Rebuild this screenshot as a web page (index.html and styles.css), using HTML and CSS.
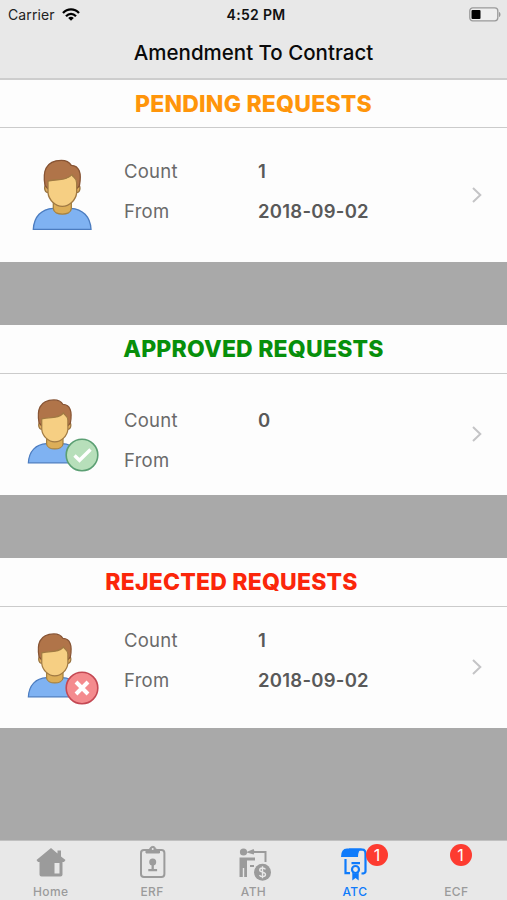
FILE: index.html
```html
<!DOCTYPE html>
<html lang="en">
<head>
    <meta charset="UTF-8">
    <meta name="viewport" content="width=device-width, initial-scale=1.0">
    <title>Amendment To Contract</title>
    <link rel="stylesheet" href="styles.css">
</head>
<body>
    <svg class="defs" width="0" height="0">
        <symbol id="person" viewBox="66 58 180 214">
            <path d="M70 268 C72 230 94 207 130 205 L182 205 C218 207 241 230 243 268 Z" fill="#7fb2f2" stroke="#4b7cc0" stroke-width="4"/>
            <path d="M130 180 V206 C132 228 182 228 184 206 V180 Z" fill="#dcae58" stroke="#a58243" stroke-width="4"/>
            <path d="M112 134 C101 132 101 156 114 158 M201 134 C213 132 213 156 200 158" fill="#e0ae5f" stroke="#96713c" stroke-width="4"/>
            <path d="M105 136 C98 96 105 62 154 61 C166 61 178 66 184 76 C207 77 216 98 208 138 L200 146 L113 146 Z" fill="#b07449" stroke="#875434" stroke-width="4"/>
            <path d="M114 124 C126 115 164 128 186 104 C189 113 200 112 200 128 V158 C198 180 178 199 157 199 C136 199 116 180 114 158 Z" fill="#f6cf83" stroke="#a17a43" stroke-width="4"/>
        </symbol>
        <symbol id="chevron" viewBox="0 0 10 16">
            <path d="M1 1 L8.3 8 L1 15" fill="none" stroke="#c4c4c6" stroke-width="2"/>
        </symbol>
    </svg>

    <header class="header">
        <div class="status-bar">
            <div class="carrier">
                <span>Carrier</span>
                <svg class="wifi" viewBox="0 0 18 13" fill="none" stroke="#000" stroke-width="2.3">
                    <path d="M1 5 C5.5 .2 12.5 .2 17 5"/>
                    <path d="M4 8.2 C7 5.1 11 5.1 14 8.2"/>
                    <path d="M6.2 10 C7.9 8.4 10.1 8.4 11.8 10 L9 12.8 Z" fill="#000" stroke="none"/>
                </svg>
            </div>
            <div class="time">4:52 PM</div>
            <svg class="battery" viewBox="0 0 32 15">
                <rect x=".8" y=".8" width="28" height="13" rx="3" fill="#eee" stroke="#999" stroke-width="1.3"/>
                <rect x="2.5" y="3" width="9" height="9" rx="1"/>
                <path d="M30 5 C32 5.5 32 9.5 30 10 Z" fill="#999"/>
            </svg>
        </div>
        <h1>Amendment To Contract</h1>
    </header>

    <main>
        <section class="card pending">
            <h2>PENDING REQUESTS</h2>
            <div class="card-body">
                <div class="avatar">
                    <svg class="person"><use href="#person"/></svg>
                </div>
                <dl>
                    <dt>Count</dt><dd>1</dd>
                    <dt>From</dt><dd>2018-09-02</dd>
                </dl>
                <svg class="chevron"><use href="#chevron"/></svg>
            </div>
        </section>

        <section class="card approved">
            <h2>APPROVED REQUESTS</h2>
            <div class="card-body">
                <div class="avatar">
                    <svg class="person"><use href="#person"/></svg>
                    <svg class="mark" viewBox="0 0 34 34">
                        <circle cx="17" cy="17" r="15.8" fill="#b7dfba" stroke="#5b9f73" stroke-width="1.6"/>
                        <path d="M9.5 17.5 L14.5 22.3 L25.5 11.5" fill="none" stroke="#fff" stroke-width="3.4"/>
                    </svg>
                </div>
                <dl>
                    <dt>Count</dt><dd>0</dd>
                    <dt>From</dt><dd></dd>
                </dl>
                <svg class="chevron"><use href="#chevron"/></svg>
            </div>
        </section>

        <section class="card rejected">
            <h2>REJECTED REQUESTS</h2>
            <div class="card-body">
                <div class="avatar">
                    <svg class="person"><use href="#person"/></svg>
                    <svg class="mark" viewBox="0 0 34 34">
                        <circle cx="17" cy="17" r="15.8" fill="#f48b8e" stroke="#c44853" stroke-width="1.6"/>
                        <path d="M11 11 L23 23 M23 11 L11 23" stroke="#fff" stroke-width="4"/>
                    </svg>
                </div>
                <dl>
                    <dt>Count</dt><dd>1</dd>
                    <dt>From</dt><dd>2018-09-02</dd>
                </dl>
                <svg class="chevron"><use href="#chevron"/></svg>
            </div>
        </section>
    </main>

    <nav class="tab-bar">
        <a class="tab">
            <svg viewBox="0 0 36 36">
                <path d="M3.5 15 L18 3 L24.5 8.5 V5.5 H28 V11.5 L32.5 15 L31 17 H29.5 V29.5 Q29.5 31.5 27.5 31.5 H8.5 Q6.5 31.5 6.5 29.5 V17 H5 Z" fill="currentColor"/>
                <rect x="21.5" y="18" width="5" height="10.5" fill="#e8e8e8"/>
            </svg>
            <span>Home</span>
        </a>
        <a class="tab">
            <svg viewBox="0 0 36 36" fill="none" stroke="currentColor" stroke-width="2">
                <rect x="7" y="5" width="23.4" height="27" rx="3"/>
                <path d="M12 8 V5 H15.5 C15.5 .2 22 .2 22 5 H25.500 V8 Z" fill="currentColor" stroke-width="1"/>
                <circle cx="18.7" cy="4" r="1" fill="#e8e8e8" stroke="none"/>
                <circle cx="18.7" cy="17" r="3.5" fill="currentColor" stroke="none"/>
                <path d="M18.7 19 V25 M14.3 25.2 H23.1" stroke-width="2.3"/>
            </svg>
            <span>ERF</span>
        </a>
        <a class="tab">
            <svg viewBox="0 0 36 36" fill="none" stroke="currentColor" stroke-width="2">
                <circle cx="7.5" cy="7" r="3.6" fill="currentColor" stroke="none"/>
                <path d="M3.5 12.5 H19 V15.5 H11 V32 H8.2 V23 H6.8 V32 H3.5 Z" fill="currentColor" stroke="none"/>
                <path d="M14 7 H29.5 V17"/>
                <path d="M18 5 L13 7 L18 8.5 M14 21 H18"/>
                <circle cx="26.5" cy="27.3" r="8.5" fill="currentColor" stroke="none"/>
                <path d="M29.5 24.3 C28 22.3 23.7 22.5 23.7 25 C23.7 27.8 29.5 26.6 29.5 29.5 C29.5 32.2 24.7 32.3 23.5 30.1 M26.5 21.3 V33.3" stroke="#e8e8e8" stroke-width="1.4"/>
            </svg>
            <span>ATH</span>
        </a>
        <a class="tab active">
            <svg viewBox="0 0 36 36" fill="none" stroke="currentColor" stroke-width="2.2">
                <path d="M4 12 Q4 3.5 10 3.5 H25 Q21 5 21 12 Z" fill="currentColor" stroke="none"/>
                <path d="M12 4.6 H25.5 Q28.5 4.6 28.5 9 V26.5 Q28.5 28.5 24.5 28.5"/>
                <path d="M8.5 14 V28.2 H13 M14.5 18.2 H23"/>
                <circle cx="18.5" cy="24.5" r="3.5"/>
                <path d="M15.3 27 V35.5 L18.5 33 L21.7 35.5 V27 Q18.5 31 15.3 27 Z" fill="currentColor" stroke="none"/>
            </svg>
            <span>ATC</span>
            <b class="badge">1</b>
        </a>
        <a class="tab empty">
            <span>ECF</span>
            <b class="badge">1</b>
        </a>
    </nav>
</body>
</html>
```
FILE: styles.css
```css
* {
    box-sizing: border-box;
}
body {
    margin: 0;
    height: 900px;
    display: flex;
    flex-direction: column;
    overflow: hidden;
    background: #a9a9a9;
    font-family: Inter, "Liberation Sans", sans-serif;
}
.defs {
    position: absolute;
}
.header {
    height: 80px;
    background: #e8e8e8;
    border-bottom: 2px solid #cdcdcd;
}
.status-bar {
    display: grid;
    grid-template-columns: 1fr auto 1fr;
    align-items: center;
    height: 28px;
    padding: 0 6px 0 8px;
    font-size: 14px;
    color: #222;
}
.carrier {
    display: flex;
    align-items: center;
    gap: 7px;
    letter-spacing: 0.1px;
}
.wifi {
    width: 18px;
    height: 13px;
}
.time {
    font-weight: 600;
    letter-spacing: 0.3px;
    padding-left: 3px;
    color: #111;
}
.battery {
    justify-self: end;
    width: 32px;
    height: 15px;
}
h1 {
    margin: 10px 0 0;
    font-size: 20.5px;
    line-height: 30px;
    font-weight: 500;
    text-align: center;
    color: #0a0a0a;
}
main {
    flex: 1;
    display: flex;
    flex-direction: column;
    gap: 63px;
}
.card {
    background: #fdfdfd;
}
h2 {
    margin: 0;
    height: 48px;
    border-bottom: 1px solid #cbcbcb;
    font-size: 23px;
    line-height: 48px;
    font-weight: 800;
    letter-spacing: 0.2px;
    text-align: center;
}
.pending h2 {
    color: #ff950a;
}
.approved h2 {
    height: 49px;
    color: #078f0b;
}
.rejected h2 {
    height: 49px;
    padding-right: 44px;
    color: #fb260a;
}
.card-body {
    display: flex;
    height: 134px;
    padding: 23px 24px 0 27px;
}
.approved .card-body {
    height: 121px;
    padding-top: 26px;
}
.rejected .card-body {
    height: 121px;
    padding-top: 13px;
}
.avatar {
    position: relative;
    width: 97px;
}
.person {
    display: block;
    width: 55px;
    height: 65px;
}
.pending .person {
    width: 60px;
    height: 72px;
    margin: 8px 0 0 5px;
}
.approved .person {
    margin-top: -1px;
}
.rejected .person {
    margin-top: 13px;
}
.mark {
    position: absolute;
    left: 38px;
    top: 38px;
    width: 34px;
    height: 34px;
}
.rejected .mark {
    top: 51px;
}
dl {
    flex: 1;
    display: grid;
    grid-template-columns: 134px 1fr;
    grid-auto-rows: 40px;
    margin: 0;
    font-size: 18.5px;
    line-height: 41px;
    letter-spacing: 0.25px;
    color: #6a6a6a;
}
dd {
    margin: 0;
    font-weight: 600;
    color: #595959;
}
.chevron {
    width: 10px;
    height: 16px;
    margin: 36px 1px 0 0;
}
.approved .chevron {
    margin-top: 26px;
}
.rejected .chevron {
    margin-top: 39px;
}
.tab-bar {
    display: flex;
    height: 60px;
    background: #e8e8e8;
    border-top: 1px solid #c0c0c0;
}
.tab {
    position: relative;
    flex: 1;
    display: flex;
    flex-direction: column;
    align-items: center;
    padding-top: 4px;
    font-size: 12px;
    font-weight: 500;
    letter-spacing: 0.35px;
    line-height: 17px;
    color: #9b9b9b;
}
.tab svg {
    width: 36px;
    height: 36px;
    margin-bottom: 2px;
}
.tab.active {
    color: #0f7bfb;
}
.tab.empty span {
    margin-top: 38px;
}
.badge {
    position: absolute;
    left: 62px;
    top: 3px;
    width: 22px;
    height: 22px;
    border-radius: 50%;
    background: #fd3b30;
    color: #fff;
    font-size: 16px;
    font-weight: 400;
    line-height: 22px;
    text-align: center;
}
.empty .badge {
    left: 44px;
}
```
